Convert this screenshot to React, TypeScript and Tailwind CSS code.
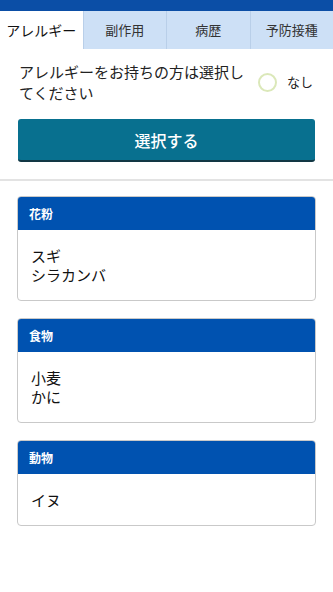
import * as React from "react";

const font = { fontFamily: '"Noto Sans CJK JP", "Noto Sans", sans-serif' };

const tabs = ["アレルギー", "副作用", "病歴", "予防接種"];

const groups = [
  { title: "花粉", items: ["スギ", "シラカンバ"] },
  { title: "食物", items: ["小麦", "かに"] },
  { title: "動物", items: ["イヌ"] },
];

export default function App() {
  return (
    <div className="w-[333px] h-[592px] bg-white overflow-hidden" style={font}>
      <div className="h-[11px] bg-[#0b4ea6]" />
      <div className="flex h-[38px]">
        {tabs.map((t, i) => (
          <div
            key={t}
            className={
              i === 0
                ? "flex-1 flex items-center justify-center bg-white text-[14px] text-[#111]"
                : "flex-1 flex items-center justify-center bg-[#cde0f6] border-l border-[#b9cfe9] text-[13px] text-[#333]"
            }
          >
            {t}
          </div>
        ))}
      </div>
      <div className="flex items-center pl-[19px] pr-[20px] pt-[12px]">
        <p className="flex-1 text-[15px] leading-[21px] text-[#222]">
          アレルギーをお持ちの方は選択し
          <br />
          てください
        </p>
        <div className="flex items-center gap-[10px]">
          <span className="w-[19px] h-[19px] rounded-full border-2 border-[#dbe8b9]" />
          <span className="text-[13px] text-[#222]">なし</span>
        </div>
      </div>
      <div className="px-[18px] pt-[16px]">
        <button className="w-full h-[43px] rounded-[3px] bg-[#08708f] border-b-2 border-[#123744] text-white text-[16px] font-medium">
          選択する
        </button>
      </div>
      <div className="mt-[17px] h-[2px] bg-[#e3e3e3]" />
      <div className="px-[17px] pt-[15px] flex flex-col gap-[17px]">
        {groups.map((g) => (
          <div key={g.title} className="rounded-[4px] border border-[#c9c9c9] overflow-hidden">
            <div className="h-[33px] bg-[#0052b0] flex items-center px-[11px] text-white text-[12px] font-bold">
              {g.title}
            </div>
            <div className="px-[13px] py-[16px] text-[15px] leading-[19px] text-[#111]">
              {g.items.map((it) => (
                <div key={it}>{it}</div>
              ))}
            </div>
          </div>
        ))}
      </div>
    </div>
  );
}
